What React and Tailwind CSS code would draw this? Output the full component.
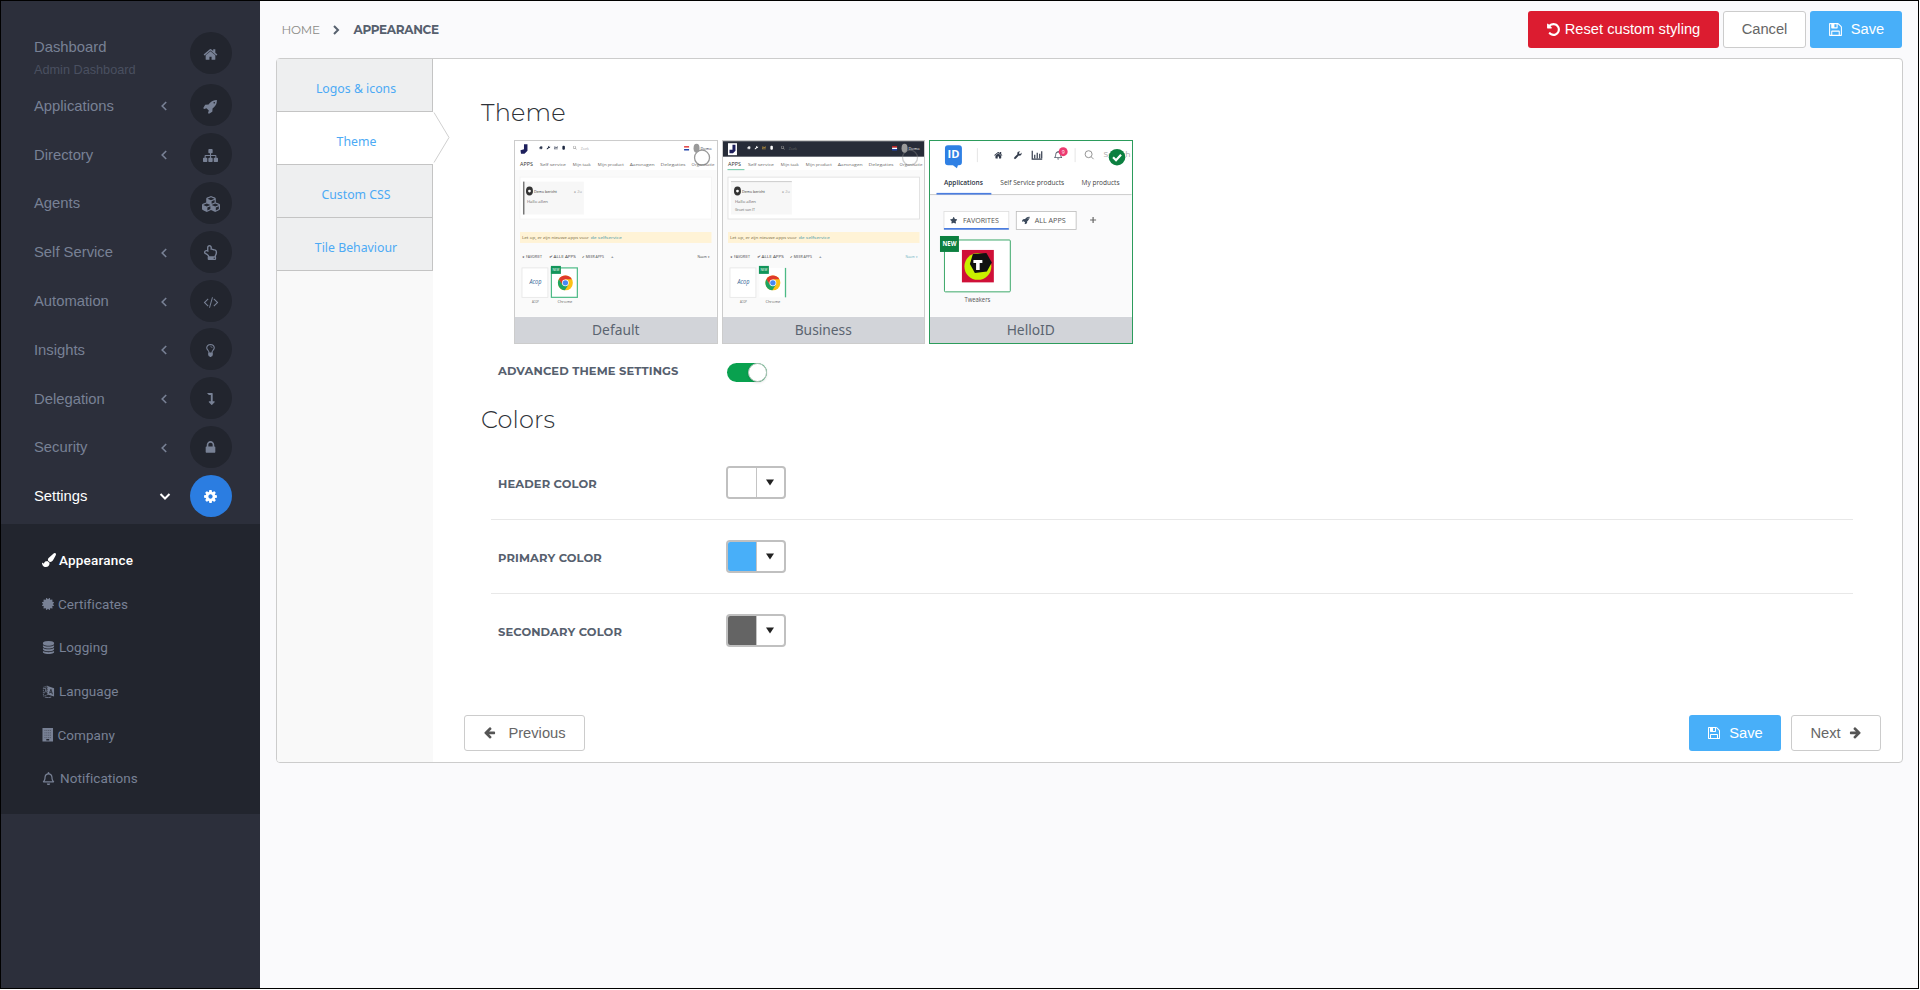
import { FaCubes, FaRegHandPointUp, FaLevelDownAlt, FaCertificate, FaRegBell, FaWrench, FaChartBar, FaStar, FaSearch } from 'react-icons/fa';

const PATHS = {
  home: 'M1472 992v480q0 26-19 45t-45 19h-384v-384h-256v384h-384q-26 0-45-19t-19-45v-480q0-1 .5-3t.5-3l575-474 575 474q1 2 1 6zm223-69l-62 74q-8 9-21 11h-3q-13 0-21-7l-692-577-692 577q-12 8-24 7-13-2-21-11l-62-74q-8-10-7-23.5t11-21.5l719-599q32-26 76-26t76 26l244 204v-195q0-14 9-23t23-9h192q14 0 23 9t9 23v408l219 182q10 8 11 21.5t-7 23.5z',
  rocket: 'M1440 448q0-40-28-68t-68-28-68 28-28 68 28 68 68 28 68-28 28-68zm224-288q0 249-75.5 430.5t-253.5 360.5q-81 80-195 176l-20 379q-2 16-16 26l-384 224q-7 4-16 4-12 0-23-9l-64-64q-13-14-8-32l85-276-281-281-276 85q-3 1-9 1-14 0-23-9l-64-64q-17-19-5-39l224-384q10-14 26-16l379-20q96-114 176-195 188-187 358-258t431-71q14 0 24 9.5t10 22.5z',
  sitemap: 'M1792 1248v320q0 40-28 68t-68 28h-320q-40 0-68-28t-28-68v-320q0-40 28-68t68-28h96v-192h-512v192h96q40 0 68 28t28 68v320q0 40-28 68t-68 28h-320q-40 0-68-28t-28-68v-320q0-40 28-68t68-28h96v-192h-512v192h96q40 0 68 28t28 68v320q0 40-28 68t-68 28h-320q-40 0-68-28t-28-68v-320q0-40 28-68t68-28h96v-192q0-52 38-90t90-38h512v-192h-96q-40 0-68-28t-28-68v-320q0-40 28-68t68-28h320q40 0 68 28t28 68v320q0 40-28 68t-68 28h-96v192h512q52 0 90 38t38 90v192h96q40 0 68 28t28 68z',
  code: 'M681 1399l-50 50q-10 10-23 10t-23-10l-466-466q-10-10-10-23t10-23l466-466q10-10 23-10t23 10l50 50q10 10 10 23t-10 23l-393 393 393 393q10 10 10 23t-10 23zm591-1067l-373 1291q-4 13-15.5 19.5t-23.5 2.5l-62-17q-13-4-19.5-15.5t-2.5-24.5l373-1291q4-13 15.5-19.5t23.5-2.5l62 17q13 4 19.5 15.5t2.5 24.5zm657 651l-466 466q-10 10-23 10t-23-10l-50-50q-10-10-10-23t10-23l393-393-393-393q-10-10-10-23t10-23l50-50q10-10 23-10t23 10l466 466q10 10 10 23t-10 23z',
  bulb: 'M1120 576q0 13-9.5 22.5t-22.5 9.5-22.5-9.5-9.5-22.5q0-46-54-71t-106-25q-13 0-22.5-9.5t-9.5-22.5 9.5-22.5 22.5-9.5q50 0 99.5 16t87 54 37.5 90zm160 0q0-72-34.5-134t-90-101.5-123-62-136.5-22.5-136.5 22.5-123 62-90 101.5-34.5 134q0 101 68 180 10 11 30.5 33t30.5 33q128 153 141 298h228q13-145 141-298 10-11 30.5-33t30.5-33q68-79 68-180zm128 0q0 155-103 268-45 49-74.5 87t-59.5 95.5-34 107.5q47 28 47 82 0 37-25 64 25 27 25 64 0 52-45 81 13 23 13 47 0 46-31.5 71t-77.5 25q-20 44-60 70t-87 26-87-26-60-70q-46 0-77.5-25t-31.5-71q0-24 13-47-45-29-45-81 0-37 25-64-25-27-25-64 0-54 47-82-4-50-34-107.5t-59.5-95.5-74.5-87q-103-113-103-268 0-99 44.5-184.5t117-142 164-89 186.5-32.5 186.5 32.5 164 89 117 142 44.5 184.5z',
  lock: 'M640 768h512v-192q0-106-75-181t-181-75-181 75-75 181v192zm832 96v576q0 40-28 68t-68 28h-960q-40 0-68-28t-28-68v-576q0-40 28-68t68-28h32v-192q0-184 132-316t316-132 316 132 132 316v192h32q40 0 68 28t28 68z',
  cog: 'M1152 896q0-106-75-181t-181-75-181 75-75 181 75 181 181 75 181-75 75-181zm512-109v222q0 12-8 23t-20 13l-185 28q-19 54-39 91 35 50 107 138 10 12 10 25t-9 23q-27 37-99 108t-94 71q-12 0-26-9l-138-108q-44 23-91 38-16 136-29 186-7 28-36 28h-222q-14 0-24.5-8.5t-11.5-21.5l-28-184q-49-16-90-37l-141 107q-10 9-25 9-14 0-25-11-126-114-165-168-7-10-7-23 0-12 8-23 15-21 51-66.5t54-70.5q-27-50-41-99l-183-27q-13-2-21-12.5t-8-23.5v-222q0-12 8-23t19-13l186-28q14-46 39-92-40-57-107-138-10-12-10-24 0-10 9-23 26-36 98.5-107.5t94.5-71.5q13 0 26 10l138 107q44-23 91-38 16-136 29-186 7-28 36-28h222q14 0 24.5 8.5t11.5 21.5l28 184q49 16 90 37l142-107q9-9 24-9 13 0 25 10 129 119 165 170 7 8 7 22 0 12-8 23-15 21-51 66.5t-54 70.5q26 50 41 98l183 28q13 2 21 12.5t8 23.5z',
  brush: 'M1615 0q70 0 122.5 46.5t52.5 116.5q0 63-45 151-332 629-465 752-97 91-218 91-126 0-216.5-92.5t-90.5-219.5q0-128 92-212l638-579q59-54 130-54zm-909 1034q39 76 106.5 130t150.5 76l1 71q4 213-129.5 347t-348.5 134q-123 0-218-46.5t-152.5-127.5-86.5-183-29-220q7 5 41 30t62 44.5 59 36.5 46 17q41 0 55-37 25-66 57.5-112.5t69.5-76 88-47.5 103-25.5 125-10.5z',
  database: 'M896 768q237 0 443-43t325-127v170q0 69-103 128t-280 93.5-385 34.5-385-34.5-280-93.5-103-128v-170q119 84 325 127t443 43zm0 768q237 0 443-43t325-127v170q0 69-103 128t-280 93.5-385 34.5-385-34.5-280-93.5-103-128v-170q119 84 325 127t443 43zm0-384q237 0 443-43t325-127v170q0 69-103 128t-280 93.5-385 34.5-385-34.5-280-93.5-103-128v-170q119 84 325 127t443 43zm0-1152q208 0 385 34.5t280 93.5 103 128v128q0 69-103 128t-280 93.5-385 34.5-385-34.5-280-93.5-103-128v-128q0-69 103-128t280-93.5 385-34.5z',
  floppy: 'M512 1536h768v-384h-768v384zm896 0h128v-896q0-14-10-38.5t-20-34.5l-281-281q-10-10-34-20t-39-10v416q0 40-28 68t-68 28h-576q-40 0-68-28t-28-68v-416h-128v1280h128v-416q0-40 28-68t68-28h832q40 0 68 28t28 68v416zm-384-928v-320q0-13-9.5-22.5t-22.5-9.5h-192q-13 0-22.5 9.5t-9.5 22.5v320q0 13 9.5 22.5t22.5 9.5h192q13 0 22.5-9.5t9.5-22.5zm640 32v928q0 40-28 68t-68 28h-1344q-40 0-68-28t-28-68v-1344q0-40 28-68t68-28h928q40 0 88 20t76 48l280 280q28 28 48 76t20 88z',
  undo: 'M1664 896q0 156-61 298t-164 245-245 164-298 61q-172 0-327-72.5t-264-204.5q-7-10-6.5-22.5t8.5-20.5l137-138q10-9 25-9 16 2 23 12 73 95 179 147t225 52q104 0 198.5-40.5t163.5-109.5 109.5-163.5 40.5-198.5-40.5-198.5-109.5-163.5-163.5-109.5-198.5-40.5q-98 0-188 35.5t-160 101.5l137 138q31 30 14 69-17 40-59 40h-448q-26 0-45-19t-19-45v-448q0-42 40-59 39-17 69 14l130 129q107-101 244.5-156.5t284.5-55.5q156 0 298 61t245 164 164 245 61 298z',
  arrow: 'M1664 896v128q0 53-32.5 90.5t-84.5 37.5h-704l293 294q38 36 38 90t-38 90l-75 76q-37 37-90 37-52 0-91-37l-651-652q-37-37-37-90 0-52 37-91l651-650q38-38 91-38 52 0 90 38l75 74q38 38 38 91t-38 91l-293 293h704q52 0 84.5 37.5t32.5 90.5z',
};

function Icon({ name, className, ...rest }) {
  return (
    <svg viewBox={name === 'code' ? '0 0 2048 1792' : '0 0 1792 1792'} fill="currentColor" className={className} {...rest}>
      <path d={PATHS[name]} />
    </svg>
  );
}

const LanguageIcon = () => (
  <svg viewBox="0 0 14 14" className="size-[13px]" fill="none" stroke="currentColor">
    <path d="M1.5 2.5L6 1v9.5L1.5 12z" strokeWidth="0.8" strokeDasharray="1.5 0.7" />
    <path d="M2 4l3-1M3.5 3.5L5 8M4.5 5L2.5 9" strokeWidth="0.8" />
    <path d="M6 1.2l7 2.3v9L6 10.2z" fill="currentColor" stroke="none" />
    <path d="M8 9l1.6-4.4L11.3 10M8.6 7.8l2 .6" stroke="#22252e" strokeWidth="0.9" />
    <path d="M3 13q4 1.4 7 0" strokeWidth="0.9" />
  </svg>
);

const CompanyIcon = () => (
  <svg viewBox="0 0 12 14" className="w-[11.500px] h-[13.500px]" fill="currentColor">
    <path fillRule="evenodd" d="M.5 0h11v14h-11zM4.500 11.500v1.500h3v-1.500z" />
    <path d="M2.500 2.500h7M2.500 5h7M2.500 7.500h7M2.500 10h7" stroke="#22252e" strokeWidth="0.700" strokeDasharray="1.2 0.7" strokeOpacity="0.600" />
  </svg>
);

const menu = [
  { label: 'Applications', icon: <Icon name="rocket" className="size-[15px]" />, sub: true },
  { label: 'Directory', icon: <Icon name="sitemap" className="size-[15px]" />, sub: true },
  { label: 'Agents', icon: <FaCubes className="size-[18px]" /> },
  { label: 'Self Service', icon: <FaRegHandPointUp className="size-[15px]" />, sub: true },
  { label: 'Automation', icon: <Icon name="code" className="w-4 h-[14px]" />, sub: true },
  { label: 'Insights', icon: <Icon name="bulb" className="size-[15px]" />, sub: true },
  { label: 'Delegation', icon: <FaLevelDownAlt className="size-[12px]" />, sub: true },
  { label: 'Security', icon: <Icon name="lock" className="size-[15px]" />, sub: true },
  { label: 'Settings', icon: <Icon name="cog" className="size-[15px]" />, sub: true, active: true },
];

const subMenu = [
  { label: 'Appearance', icon: <Icon name="brush" className="size-[14px]" />, active: true },
  { label: 'Certificates', icon: <FaCertificate className="size-3" /> },
  { label: 'Logging', icon: <Icon name="database" className="size-[13px]" /> },
  { label: 'Language', icon: <LanguageIcon /> },
  { label: 'Company', icon: <CompanyIcon /> },
  { label: 'Notifications', icon: <FaRegBell className="size-[13px] mr-px" /> },
];

function Sidebar() {
  return (
    <aside className="w-[259px] shrink-0 bg-[#2c2f3b] font-['Liberation_Sans',sans-serif] text-[14.800px] text-[#788195]">
      <div className="flex justify-between pl-[33px] pr-[28.500px] pt-[31px] h-[80px]">
        <div className="pt-[5px]">
          <div className="leading-5">Dashboard</div>
          <div className="mt-[3px] text-[12.700px] leading-5 text-[#4a5060]">Admin Dashboard</div>
        </div>
        <div className="size-[42px] rounded-full bg-[#22252e] flex items-center justify-center">
          <Icon name="home" className="size-[15px] mt-0.5" />
        </div>
      </div>
      <nav>
        {menu.map((item) => (
          <div key={item.label} className={`flex items-center h-[48.8px] pl-[33px] pr-[28.500px] ${item.active ? 'text-white' : ''}`}>
            <span className="flex-1 pt-px">{item.label}</span>
            {item.sub && (
              <svg viewBox="0 0 12 12" className={`size-3 mt-0.5 ${item.active ? 'mr-[18.500px]' : 'mr-[19.500px]'}`} fill="none" stroke="currentColor">
                {item.active ? <path d="M1.5 3L6 7.5L10.500 3" strokeWidth="2" /> : <path d="M8.200 2L4.200 6L8.200 10" strokeWidth="1.600" />}
              </svg>
            )}
            <div className={`size-[42px] rounded-full flex items-center justify-center pt-0.5 ${item.active ? 'bg-[#2b7de1]' : 'bg-[#22252e]'}`}>
              {item.icon}
            </div>
          </div>
        ))}
      </nav>
      <div className="mt-[4px] h-[290px] bg-[#22252e] pt-[14px] pl-[41px] font-[Roboto,sans-serif] text-[13.500px]">
        {subMenu.map((item) => (
          <div key={item.label} className={`flex items-center h-[43.700px] ${item.active ? 'gap-[3px] text-white font-medium tracking-[0.2px]' : 'gap-[4px] tracking-[0.050px]'}`}>
            {item.icon}
            {item.label}
          </div>
        ))}
      </div>
    </aside>
  );
}

function Button({ variant = 'plain', className = '', children }) {
  const look = {
    plain: 'bg-white border border-[#ccc] text-[#666]',
    blue: 'bg-[#48aff9] text-white',
    red: 'bg-[#dc1c30] text-white',
  }[variant];
  return (
    <button className={`h-[36.500px] rounded-[3px] flex items-center justify-center whitespace-nowrap font-['Liberation_Sans',sans-serif] text-[14.700px] ${look} ${className}`}>
      {children}
    </button>
  );
}

const T = ({ x, y, w, size = 4, fill = '#666', children, ...rest }) => (
  <text x={x} y={y} textLength={w} lengthAdjust="spacingAndGlyphs" fontSize={size} fill={fill} {...rest}>
    {children}
  </text>
);

const Chrome = ({ x, y }) => (
  <g transform={`translate(${x} ${y})`}>
    <circle r="7.500" fill="#fbc116" />
    <path d="M-6.500 -3.700A7.500 7.500 0 0 1 6.500 -3.700L0 -3.500L-3.200 1.800Z" fill="#e0392b" />
    <path d="M-6.500 -3.700A7.500 7.500 0 0 0 -.5 7.500L3 2L-3 2Z" fill="#1da462" />
    <circle r="3.400" fill="#fff" />
    <circle r="2.700" fill="#4688f4" />
  </g>
);

// Portal preview shared by the Default and Business themes
function PortalPreview({ dark }) {
  const ink = dark ? '#fff' : '#1c2740';
  return (
    <svg viewBox="0 0 202 176" className="w-full h-[176px] font-['Open_Sans',sans-serif]">
      <rect width="202" height="176" fill="#fafafa" />
      <rect width="202" height={dark ? 15.500 : 16} fill={dark ? '#272c38' : '#fff'} />
      <rect y="16" width="202" height="13" fill="#fff" />
      {dark && <rect x="5" y="2" width="9" height="12" fill="#fff" />}
      <path d={dark ? 'M9.500 3.500h3v6l-2.500 2.500H6.500V8.500h3z' : 'M9 3h3.500v6.500L9.500 12.500H6L5.500 9 9 8z'} fill="#1d1f5c" />
      <Icon name="home" x="24" y="4.500" width="4" height="4" color={ink} />
      <FaWrench x="31.500" y="4.500" size="4" color={ink} />
      <FaChartBar x="39" y="4.500" size="4" color={dark ? '#d9a93c' : ink} />
      <rect x="47.500" y="4.500" width="2.500" height="4" rx="1" fill={ink} />
      <FaSearch x="58" y="4.500" size="4" color="#999" />
      <T x="66" y="8.500" w="8" fill={dark ? '#666' : '#aaa'}>Zoek</T>
      <rect x="169.500" y="5" width="5" height="1.500" fill="#d22" />
      <rect x="169.500" y="6.500" width="5" height="1.300" fill="#fff" />
      <rect x="169.500" y="7.800" width="5" height="1.500" fill="#24a" />
      <ellipse cx="182" cy="7" rx="3" ry="4.500" fill="#999" />
      <T x="186" y="9" w="11" size="3.600" fill={ink}>Demo</T>
      <circle cx="187.500" cy="16.500" r="7.500" fill={dark ? 'none' : '#fff'} fillOpacity="0.700" stroke={dark ? '#888' : '#999'} strokeWidth="1.300" strokeOpacity={dark ? 0.4 : 1} />

      <T x="5" y="24.500" w="13" size="4.500" fill="#333">APPS</T>
      <T x="25" y="24.500" w="26">Self service</T>
      <T x="58" y="24.500" w="18">Mijn taak</T>
      <T x="83" y="24.500" w="26">Mijn product</T>
      <T x="115" y="24.500" w="25">Aanvragen</T>
      <T x="146" y="24.500" w="25">Delegaties</T>
      <T x="177" y="24.500" w="23">Organisatie</T>
      {dark && <rect x="4.500" y="28" width="17" height="1" fill="#6cc9a6" />}

      <rect x="5" y="36" width="192" height="42" fill="#fff" stroke={dark ? '#ddd' : '#f3f3f3'} strokeWidth="0.800" />
      <rect x="8" y="40.500" width="61" height="33" fill="#f7f7f7" />
      {dark ? <rect x="8" y="40" width="61" height="1" fill="#ccc" /> : <rect x="8" y="40.500" width="1.500" height="33" fill="#777" />}
      <ellipse cx="14.500" cy="50" rx="3.500" ry="4.500" fill="#333" />
      <circle cx="14.500" cy="50" r="1.400" fill="#fff" />
      <T x="19" y="51.500" w="23" fill="#333">Demo bericht</T>
      <T x="59" y="51.500" w="8" size="3.500" fill="#aaa">● 2u</T>
      <T x="12" y="62" w="21">Hallo allen</T>
      {dark && <T x="12" y="69.500" w="20">Groet van IT</T>}

      <rect x="5" y="91" width="192" height="11" fill="#fff3d6" />
      <T x="7" y="98" w="67" fill="#75673f">Let op, er zijn nieuwe apps voor</T>
      <T x="76" y="98" w="31" fill="#4593a5">de selfservice</T>

      <T x="7" y="117.500" w="20" size="3.500" fill="#444">★ FAVORIET</T>
      <T x="34" y="117.500" w="27" fill="#444">✔ ALLE APPS</T>
      <T x="67" y="117.500" w="22" size="3.500" fill="#444">✔ MEER APPS</T>
      <T x="96" y="117.500" w="3" fill="#444">+</T>
      <T x="183" y="117.500" w="12" size="3.500" fill={dark ? '#6ab0c0' : '#444'}>Naam ▾</T>

      <rect x="7" y="127" width="26" height="29.500" fill="#fff" stroke="#e5e5e5" strokeWidth="0.800" />
      <T x="14.500" y="143.500" w="12" size="7.500" fill="#2f5f96" fontStyle="italic">Acop</T>
      <rect x="36.500" y="127" width="26" height="29.500" fill="#fff" />
      {dark ? <rect x="62" y="127" width="1.300" height="29.500" fill="#4cba86" /> : <rect x="36.500" y="127" width="26" height="29.500" fill="none" stroke="#4cba86" strokeWidth="1.200" />}
      <Chrome x={dark ? 50 : 50.500} y="142" />
      <rect x="36" y="125" width="10" height="8" fill="#12955a" />
      <T x="37.500" y="130.500" w="7" size="3.500" fill="#fff">NEW</T>
      <T x="17" y="162.500" w="7" size="3.500">ACOP</T>
      <T x="42.500" y="162.500" w="15">Chrome</T>
    </svg>
  );
}

function HelloIdPreview() {
  return (
    <svg viewBox="0 0 202 176" className="w-full h-[176px] font-['Open_Sans',sans-serif]">
      <rect width="202" height="176" fill="#fafafb" />
      <rect width="202" height="53" fill="#fff" />
      <path d="M0 53.500H202" stroke="#ccc" />
      <path d="M18 4h11q3 0 3 3v14q0 3-3 3h-1l-1 3-4-3H18q-3 0-3-3V7q0-3 3-3z" fill="#2f80e4" />
      <T x="17.500" y="16.500" w="12" size="10" fill="#fff" fontWeight="700">ID</T>
      <path d="M47.500 7v14M145.500 7v14" stroke="#e5e5e5" />
      <Icon name="home" x="64" y="9.500" width="9" height="9" color="#333c4c" />
      <FaWrench x="84" y="10" size="8" color="#333c4c" />
      <path d="M102.500 9.500v8.500h10M105 13.500v3.500M107.500 11.500v5.500M110 12.500v4.500M112 10v7" stroke="#333c4c" strokeWidth="1.200" fill="none" />
      <FaRegBell x="124" y="9.500" size="9" color="#555e6c" />
      <circle cx="133.500" cy="10.500" r="4.500" fill="#ec3a70" />
      <T x="132" y="12.500" w="3" size="6" fill="#fff">9</T>
      <circle cx="159" cy="13" r="3.500" fill="none" stroke="#888" strokeWidth="0.900" />
      <path d="M161.500 15.500l2.500 2.500" stroke="#888" strokeWidth="0.900" />
      <T x="174" y="16" w="27" size="7.500" fill="#aaa">Search</T>
      <circle cx="187.500" cy="16" r="8.300" fill="#0c8040" />
      <path d="M183.500 16l3 3 5-5.500" fill="none" stroke="#fff" strokeWidth="2.200" />

      <T x="14" y="44" w="39" size="7" fill="#2a3342" fontWeight="600">Applications</T>
      <T x="70.500" y="44" w="64" size="7" fill="#444">Self Service products</T>
      <T x="152" y="44" w="38" size="7" fill="#444">My products</T>
      <rect x="6.500" y="51.800" width="55" height="1.700" fill="#4a7de0" />

      <rect x="14" y="70.500" width="65" height="18" fill="#fff" stroke="#ddd" strokeWidth="0.800" />
      <rect x="14" y="87" width="65" height="1.700" fill="#4a7de0" />
      <FaStar x="20" y="75.500" size="7.500" color="#3c4a5c" />
      <T x="33" y="82" w="36" size="6.500" fill="#555">FAVORITES</T>
      <rect x="86.500" y="70.500" width="60" height="18" fill="#fff" stroke="#bbb" strokeWidth="0.800" />
      <Icon name="rocket" x="92" y="75" width="8.500" height="8.500" color="#3c4a5c" />
      <T x="105" y="82" w="31" size="6.500" fill="#555">ALL APPS</T>
      <path d="M160.500 79h6M163.500 76v6" stroke="#666" strokeWidth="1.200" />

      <rect x="14.500" y="99" width="66" height="52" rx="1" fill="#fff" stroke="#3ba868" />
      <rect x="10" y="95" width="19" height="16" fill="#0c8040" />
      <T x="12.500" y="105.500" w="14" size="6.500" fill="#fff" fontWeight="700">NEW</T>
      <rect x="32" y="109" width="32" height="32.500" fill="#cf1038" />
      <circle cx="48" cy="125.500" r="13.500" fill="#c8f000" />
      <path d="M43 113L56.500 112L62 121.500L57 130.500L45 132L40 123Z" fill="#111" />
      <path d="M43.500 119h9v3h-2.700v7h-3.600v-7h-2.700z" fill="#fff" />
      <T x="34.500" y="161" w="26" size="6.500" fill="#555">Tweakers</T>
    </svg>
  );
}

const themes = [
  { name: 'Default', preview: <PortalPreview /> },
  { name: 'Business', preview: <PortalPreview dark /> },
  { name: 'HelloID', preview: <HelloIdPreview />, selected: true },
];

const tabs = ['Logos & icons', 'Theme', 'Custom CSS', 'Tile Behaviour'];

const colors = [
  { label: 'HEADER COLOR', swatch: 'bg-white' },
  { label: 'PRIMARY COLOR', swatch: 'bg-[#48aff9]' },
  { label: 'SECONDARY COLOR', swatch: 'bg-[#646464]' },
];

const labelStyle = "font-[Montserrat,Inter,sans-serif] font-bold text-[11.500px] tracking-[0.120px] text-[#56606e]";
const headingStyle = "font-[Montserrat,Inter,sans-serif] font-light text-[24px] leading-8 tracking-[0.150px] text-[#2e3238]";

export default function App() {
  return (
    <div className="w-[1920px] h-[990px] bg-white overflow-hidden">
      <div className="w-[1919px] h-[989px] border border-black flex bg-[#fafafc]">
        <Sidebar />
        <main className="flex-1 pl-4 pr-[15px] pt-[10px]">
          <div className="flex items-center justify-between h-[37px]">
            <div className="flex items-center pl-[5.500px] font-[Montserrat,Inter,sans-serif] text-[12px] text-[#56606e]">
              <span className="w-[38px] tracking-[-0.250px] text-[#8a8a86]">HOME</span>
              <svg viewBox="0 0 8 10" className="w-2 h-2.5 ml-[12px] mr-[14px]" fill="none" stroke="currentColor" strokeWidth="2">
                <path d="M2 1l4 4-4 4" />
              </svg>
              <span className="font-bold tracking-[-0.300px]">APPEARANCE</span>
            </div>
            <div className="flex mr-px">
              <Button variant="red" className="w-[191px] gap-1 mr-[4.500px]"><Icon name="undo" className="size-[15px]" />Reset custom styling</Button>
              <Button className="w-[83px] mr-[4px]">Cancel</Button>
              <Button variant="blue" className="w-[92px] gap-2"><Icon name="floppy" className="size-[15px]" />Save</Button>
            </div>
          </div>

          <div className="mt-[10px] h-[705px] flex border border-[#ccc] rounded-[4px] bg-white">
            <div className="w-[156px] shrink-0 bg-[#f9f9f9] rounded-l-[3px] font-['Noto_Sans',sans-serif] text-[12.300px] text-[#4caaf5]">
              {tabs.map((tab) => (
                <div
                  key={tab}
                  className={`relative h-[53px] flex items-center justify-center pt-[8px] pl-[3px] border-b border-[#c4c4c4] ${tab === 'Theme' ? 'bg-white' : 'bg-[#eeeff0] border-r'}`}
                >
                  {tab}
                  {tab === 'Theme' && (
                    <svg viewBox="0 0 18 52" className="absolute left-full top-0 w-[18px] h-[52px]" fill="#fff" stroke="#d0d0d0">
                      <path d="M1 0.500L16 25.500L1 50.500" />
                    </svg>
                  )}
                </div>
              ))}
            </div>

            <div className="flex-1 flex flex-col pl-[31px] pr-[21px]">
              <h2 className={`${headingStyle} mt-[38px] ml-[17px]`}>Theme</h2>
              <div className="flex gap-[4px] mt-[11px] ml-[50px]">
                {themes.map((t) => (
                  <div key={t.name} className={`w-[203.500px] h-[204px] border ${t.selected ? 'border-[#2c9c5c]' : 'border-[#ccc]'}`}>
                    {t.preview}
                    <div className="h-[26px] bg-[#d2d4d9] flex items-center justify-center font-['Noto_Sans',sans-serif] text-[13.800px] text-[#5b6470]">
                      {t.name}
                    </div>
                  </div>
                ))}
              </div>

              <div className="flex items-center h-[20px] mt-[18px] ml-[34px]">
                <span className={`${labelStyle} w-[228.500px]`}>ADVANCED THEME SETTINGS</span>
                <div className="w-[40px] h-[19px] rounded-full bg-[#09a14f] flex justify-end">
                  <div className="size-[19px] rounded-full bg-white border border-[#b5c5bc] shadow-sm" />
                </div>
              </div>

              <h2 className={`${headingStyle} mt-[22px] ml-[17px]`}>Colors</h2>
              <div className="mt-[10px] ml-[27px] mr-[28px]">
                {colors.map((c) => (
                  <div key={c.label} className="h-[73.800px] flex items-center pl-[7px] border-b border-[#e8e8e8] last:border-0">
                    <span className={`${labelStyle} w-[227.500px] pt-[4px]`}>{c.label}</span>
                    <div className="w-[60px] h-[33px] flex border-2 border-[#c0c0c0] rounded-[4px] bg-white">
                      <div className={`w-[29px] rounded-l-[2px] border-r border-[#c4c4c4] ${c.swatch}`} />
                      <div className="flex-1 flex items-center justify-center">
                        <svg viewBox="0 0 8 7" className="w-2 h-[7px]" fill="#222"><path d="M0 0.500h8L4 6.500z" /></svg>
                      </div>
                    </div>
                  </div>
                ))}
              </div>

              <div className="flex mt-auto mb-[11px]">
                <Button className="w-[121px] gap-3"><Icon name="arrow" className="size-[13px] text-[#555]" />Previous</Button>
                <Button variant="blue" className="w-[92px] gap-2 ml-auto mr-[10px]"><Icon name="floppy" className="size-[14px]" />Save</Button>
                <Button className="w-[90px] gap-2">Next<Icon name="arrow" className="size-[13px] text-[#555] -scale-x-100" /></Button>
              </div>
            </div>
          </div>
        </main>
      </div>
    </div>
  );
}
